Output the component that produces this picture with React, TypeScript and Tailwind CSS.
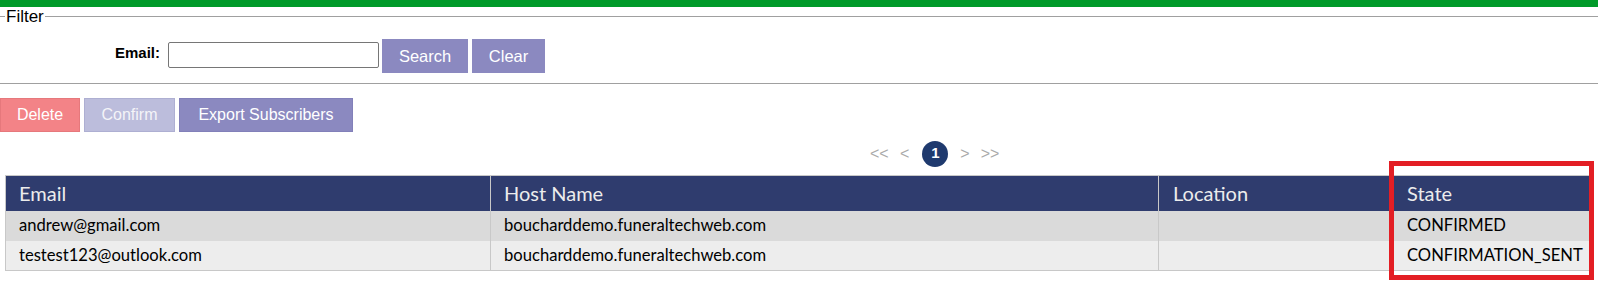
import React from "react";

const rows = [
  { email: "andrew@gmail.com", host: "boucharddemo.funeraltechweb.com", location: "", state: "CONFIRMED" },
  { email: "testest123@outlook.com", host: "boucharddemo.funeraltechweb.com", location: "", state: "CONFIRMATION_SENT" },
];

export default function App() {
  return (
    <div className="w-[1598px] h-[291px] bg-white relative overflow-hidden font-['Liberation_Sans',Arial,sans-serif]">
      <div className="h-[7px] bg-[#009a29]" />

      {/* filter */}
      <fieldset className="border-x-0 border-y border-[#a0a0a0] pl-[5px] pb-[10px]">
        <legend className="px-px text-[17px] leading-[19px] text-black">Filter</legend>
        <div className="flex items-start mt-[13px] ml-[110px]">
          <label className="font-bold text-[15px] mt-[3px] mr-[8px]">Email:</label>
          <input type="text" className="w-[211px] h-[26px] mt-[3px] border border-[#767676] rounded-[2px]" />
          <button className="ml-[3px] h-[34px] w-[86px] bg-[#8b89c0] text-white text-[16.5px]">Search</button>
          <button className="ml-[4px] h-[34px] w-[73px] bg-[#8b89c0] text-white text-[16.5px]">Clear</button>
        </div>
      </fieldset>

      <div className="flex gap-[4px] mt-[14px]">
        <button className="h-[34px] w-[80px] bg-[#f38387] border border-[#e6787c] text-white text-[16px]">Delete</button>
        <button className="h-[34px] w-[91px] bg-[#bcbddc] border border-[#aeafd2] text-[#f4f4f8] text-[16px]">Confirm</button>
        <button className="h-[34px] w-[174px] bg-[#8b89c0] border border-[#8280b9] text-white text-[16px]">Export Subscribers</button>
      </div>

      {/* pagination */}
      <div className="flex items-center ml-[870px] mt-[8px] h-[27px] text-[16px] text-[#aaaaaa]">
        <span className="w-[18px]">&lt;&lt;</span>
        <span className="ml-[12px]">&lt;</span>
        <span className="ml-[13px] w-[26px] h-[26px] rounded-full bg-[#1f3a6e] text-white font-bold flex items-center justify-center text-[15px]">1</span>
        <span className="ml-[12px]">&gt;</span>
        <span className="ml-[11px]">&gt;&gt;</span>
      </div>

      <table className="ml-[5px] mt-[8px] w-[1588px] border border-[#c8c8c8] border-collapse font-['Lato',sans-serif] text-[16.6px] table-fixed">
        <thead>
          <tr className="bg-[#2f3c6e] text-[#ececec] h-[35px]">
            <th className="w-[485px] text-left font-normal pl-[13px] border-r border-[#c8c8c8] text-[20px]">Email</th>
            <th className="w-[668px] text-left font-normal pl-[13px] border-r border-[#c8c8c8] text-[20px]">Host Name</th>
            <th className="w-[235px] text-left font-normal pl-[14px] border-r border-[#c8c8c8] text-[20px]">Location</th>
            <th className="text-left font-normal pl-[13px] text-[20px]">State</th>
          </tr>
        </thead>
        <tbody>
          {rows.map((r, i) => (
            <tr key={i} className={`h-[30px] text-black ${i % 2 === 0 ? "bg-[#dadada]" : "bg-[#ededed]"}`}>
              <td className="pl-[13px] border-r border-[#c8c8c8]">{r.email}</td>
              <td className="pl-[13px] border-r border-[#c8c8c8]">{r.host}</td>
              <td className="pl-[14px] border-r border-[#c8c8c8]">{r.location}</td>
              <td className="pl-[13px] whitespace-nowrap">{r.state}</td>
            </tr>
          ))}
        </tbody>
      </table>

      {/* highlight box */}
      <div className="absolute left-[1389px] top-[161px] w-[205px] h-[119px] border-[5px] border-[#e31e24] pointer-events-none" />
    </div>
  );
}
